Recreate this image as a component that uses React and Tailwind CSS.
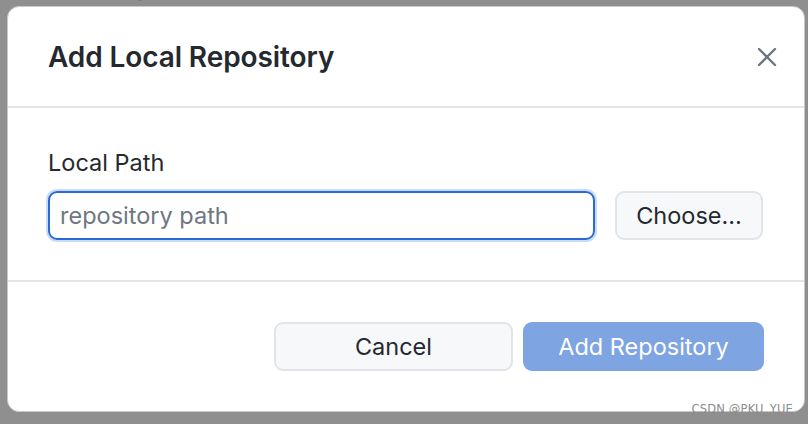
import React from 'react';

const font = { fontFamily: 'Inter, "Noto Sans", sans-serif' };

const CloseIcon = () => (
  <svg width="20" height="20" viewBox="0 0 20 20" fill="none">
    <path d="M2 2L18 18M18 2L2 18" stroke="#6e7781" strokeWidth="2.4" strokeLinecap="round" />
  </svg>
);

const App = () => {
  return (
    <div className="relative w-[808px] h-[424px] bg-[#8f8f8f] overflow-hidden" style={font}>
      <div className="h-[6px] overflow-hidden pl-[55px]">
        <div className="-mt-[24px] text-[26px] leading-[30px] text-[#2e2e2e] font-medium">for what to do next.</div>
      </div>
      <div className="ml-[7px] w-[798px] h-[406px] bg-white rounded-[12px] border border-[#c9c9c9] flex flex-col overflow-hidden">
        <div className="h-[101px] shrink-0 flex items-center justify-between pl-[40px] pr-[27px] border-b-2 border-[#e3e5e8]">
          <h1 className="text-[28px] font-semibold text-[#24292f] tracking-[-0.1px]">Add Local Repository</h1>
          <button className="w-[20px] h-[20px] flex items-center justify-center">
            <CloseIcon />
          </button>
        </div>
        <div className="h-[174px] shrink-0 px-[40px] pt-[40px] border-b-2 border-[#e3e5e8]">
          <label className="block text-[23.5px] leading-[30px] text-[#24292f]">Local Path</label>
          <div className="mt-[13px] flex items-center gap-[20px]">
            <div className="w-[547px] h-[49px] rounded-[9px] border-2 border-[#2a6ad6] shadow-[0_0_0_2px_#c8dbf7] flex items-center px-[10px]">
              <input
                className="w-full outline-none text-[23.5px] text-[#24292f] placeholder:text-[#6e7781] bg-transparent"
                placeholder="repository path"
                style={font}
              />
            </div>
            <button className="w-[148px] h-[49px] rounded-[9px] border-2 border-[#e1e4e8] bg-[#f6f8fa] text-[23.5px] text-[#24292f]">
              Choose…
            </button>
          </div>
        </div>
        <div className="flex-1 flex justify-end items-start gap-[10px] pt-[40px] pr-[40px]">
          <button className="w-[239px] h-[49px] rounded-[9px] border-2 border-[#e1e4e8] bg-[#f6f8fa] text-[23.5px] text-[#24292f]">
            Cancel
          </button>
          <button className="w-[241px] h-[49px] rounded-[9px] bg-[#7ea4e2] text-[23.5px] text-white">
            Add Repository
          </button>
        </div>
      </div>
      <div
        className="absolute right-[15px] bottom-[8px] text-[11.5px] leading-[14px] text-[#8c8c8c] tracking-[0.2px]"
        style={{ fontFamily: '"DejaVu Sans", sans-serif' }}
      >
        CSDN @PKU_YUE
      </div>
    </div>
  );
};

export default App;
